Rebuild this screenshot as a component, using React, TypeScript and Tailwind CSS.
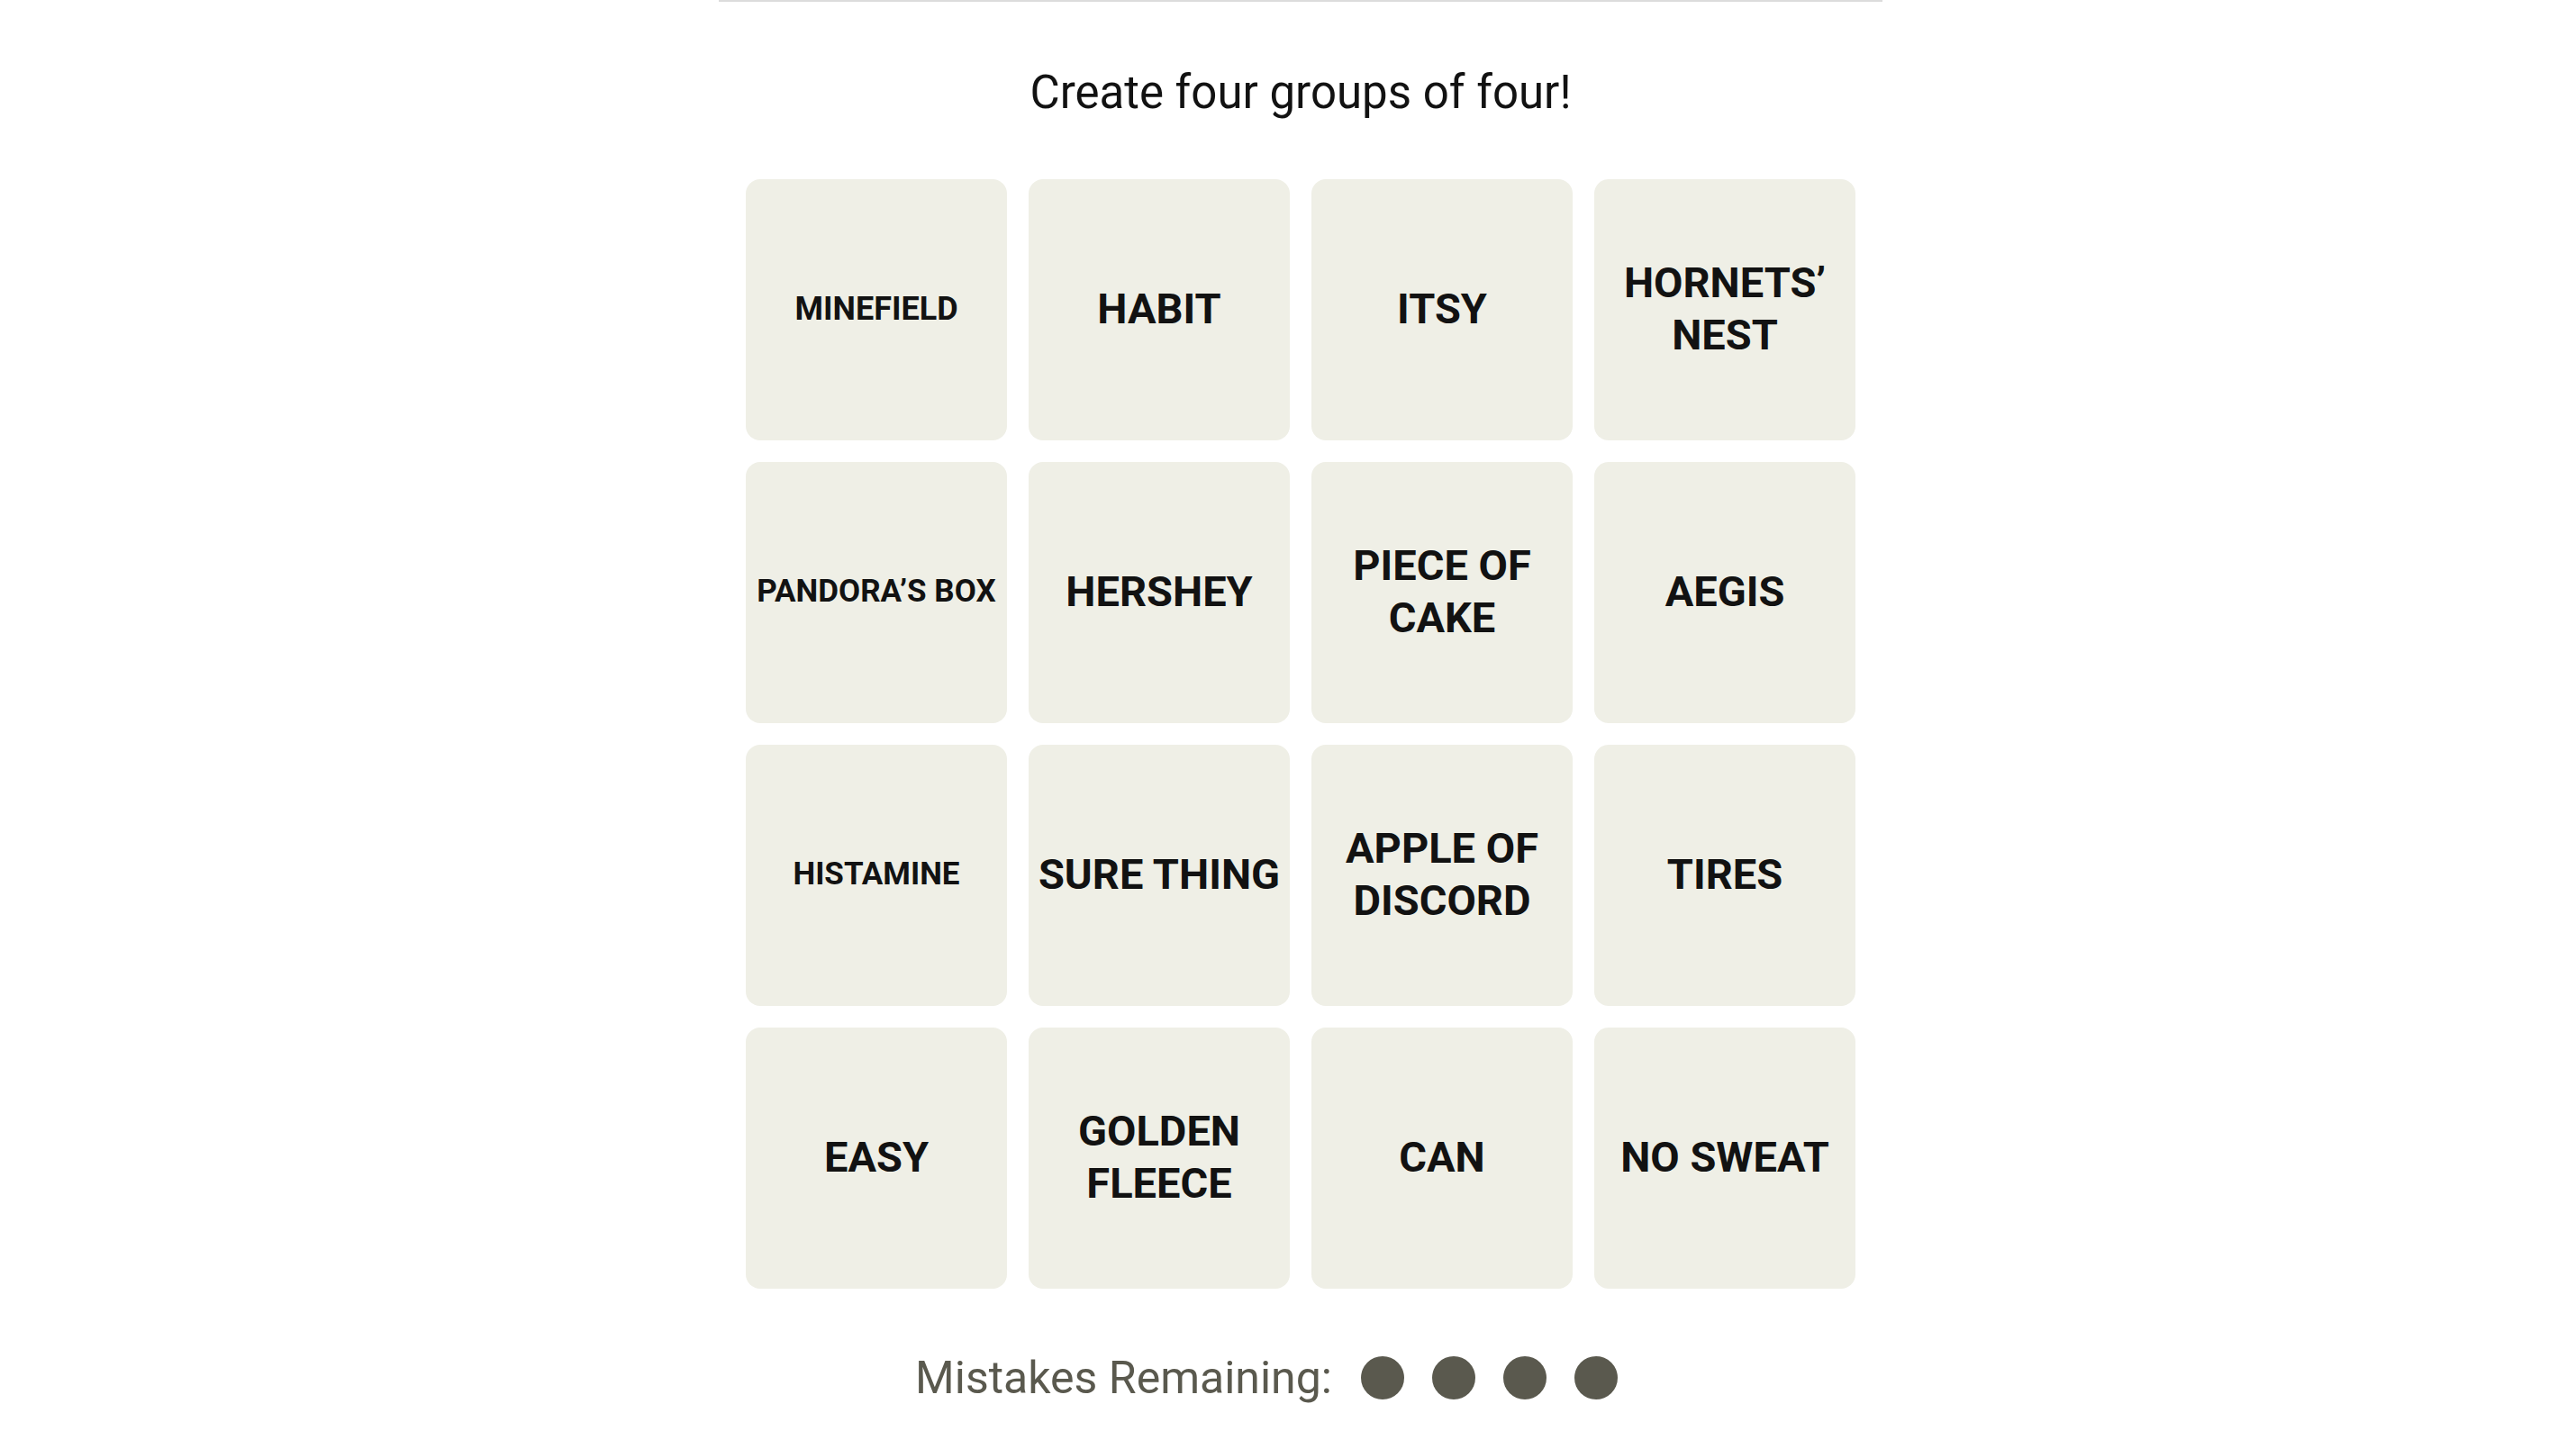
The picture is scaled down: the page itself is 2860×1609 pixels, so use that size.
import React from "react";

const words: string[][] = [
  ["MINEFIELD"],
  ["HABIT"],
  ["ITSY"],
  ["HORNETS’", "NEST"],
  ["PANDORA’S BOX"],
  ["HERSHEY"],
  ["PIECE OF", "CAKE"],
  ["AEGIS"],
  ["HISTAMINE"],
  ["SURE THING"],
  ["APPLE OF", "DISCORD"],
  ["TIRES"],
  ["EASY"],
  ["GOLDEN", "FLEECE"],
  ["CAN"],
  ["NO SWEAT"],
];

const small: Record<string, string> = {
  MINEFIELD: "text-[36px]",
  "PANDORA’S BOX": "text-[35px]",
  HISTAMINE: "text-[35px]",
};

function Tile({ lines }: { lines: string[] }) {
  const size = small[lines[0]] ?? "text-[47px]";
  return (
    <div className="flex h-[290px] w-[290px] items-center justify-center rounded-[16px] bg-[#efefe6] px-[4px] pb-[2px] text-center">
      <div className={`${size} font-bold leading-[58px] text-[#121212] whitespace-nowrap`}>
        {lines.map((l, i) => (
          <div key={i}>{l}</div>
        ))}
      </div>
    </div>
  );
}

export default function App() {
  return (
    <div
      className="min-h-[1609px] w-full bg-white pl-[28px] flex justify-center"
      style={{ fontFamily: "Roboto, 'Liberation Sans', sans-serif" }}
    >
      <div className="w-[1292px] flex flex-col">
        <div className="h-[2px] w-full bg-[#dcdcdc]" />
        <div className="mt-[70px] h-[62px] text-center text-[51px] leading-[62px] text-[#121212]">
          Create four groups of four!
        </div>
        <div className="mt-[65px] grid grid-cols-[repeat(4,290px)] gap-[24px] justify-center">
          {words.map((w, i) => (
            <Tile key={i} lines={w} />
          ))}
        </div>
        <div className="mt-[68px] flex h-[62px] items-center justify-center pr-[76px]">
          <span className="text-[50px] leading-[62px] text-[#5a594e]">Mistakes Remaining:</span>
          <div className="ml-[32px] flex gap-[31px]">
            {[0, 1, 2, 3].map((i) => (
              <span key={i} className="block h-[48px] w-[48px] rounded-full bg-[#5a594e]" />
            ))}
          </div>
        </div>
      </div>
    </div>
  );
}
